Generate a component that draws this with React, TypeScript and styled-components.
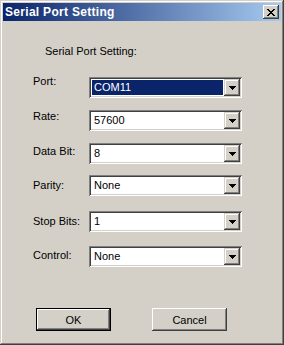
import styled, { createGlobalStyle } from 'styled-components'

const GlobalStyle = createGlobalStyle`
  html, body {
    margin: 0;
    padding: 0;
    background: #d4d0c8;
  }
  * {
    box-sizing: border-box;
  }
`

const Window = styled.div`
  width: 284px;
  height: 345px;
  padding: 3px;
  background: #d4d0c8;
  font-family: 'Liberation Sans', Arial, sans-serif;
  font-size: 11px;
  color: #000;
  box-shadow: inset -1px -1px #404040, inset 1px 1px #d4d0c8, inset -2px -2px #808080,
    inset 2px 2px #fff;
  display: flex;
  flex-direction: column;
`

const TitleBar = styled.div`
  height: 18px;
  display: flex;
  align-items: center;
  justify-content: space-between;
  padding: 0 2px 0 2px;
  background: linear-gradient(to right, #0a246a, #a6caf0);
`

const TitleText = styled.span`
  color: #fff;
  font-weight: bold;
  font-size: 12px;
  letter-spacing: 0.3px;
  line-height: 14px;
`

const CloseButton = styled.div`
  width: 16px;
  height: 14px;
  background: #d4d0c8;
  display: flex;
  align-items: center;
  justify-content: center;
  box-shadow: inset -1px -1px #404040, inset 1px 1px #fff, inset -2px -2px #808080,
    inset 2px 2px #d4d0c8;
`

const Body = styled.div`
  flex: 1;
  padding: 24px 0 0 30px;
  display: flex;
  flex-direction: column;
`

const Heading = styled.div`
  line-height: 13px;
  padding-left: 12px;
  margin-bottom: 19px;
`

const Row = styled.div<{ $gap: number }>`
  display: flex;
  align-items: flex-start;
  margin-top: ${({ $gap }) => $gap}px;
`

const Label = styled.div<{ $dy: number }>`
  width: 56px;
  line-height: 13px;
  margin-top: ${({ $dy }) => $dy}px;
`

const Combo = styled.div`
  width: 153px;
  height: 21px;
  padding: 2px;
  background: #fff;
  display: flex;
  box-shadow: inset 1px 1px #808080, inset -1px -1px #fff, inset 2px 2px #404040,
    inset -2px -2px #d4d0c8;
`

const ComboValue = styled.div<{ $selected?: boolean }>`
  flex: 1;
  display: flex;
  align-items: center;
  margin: 1px;
  padding-left: 2px;
  line-height: 15px;
  background: ${({ $selected }) => ($selected ? '#0a246a' : '#fff')};
  color: ${({ $selected }) => ($selected ? '#fff' : '#000')};
`

const ArrowButton = styled.div`
  width: 16px;
  height: 17px;
  background: #d4d0c8;
  display: flex;
  align-items: center;
  justify-content: center;
  box-shadow: inset -1px -1px #404040, inset 1px 1px #d4d0c8, inset -2px -2px #808080,
    inset 2px 2px #fff;
`

const Buttons = styled.div`
  display: flex;
  gap: 41px;
  margin-top: 41px;
  padding-left: 3px;
`

const Button = styled.div<{ $default?: boolean }>`
  width: 75px;
  height: 23px;
  display: flex;
  align-items: center;
  justify-content: center;
  background: #d4d0c8;
  box-shadow: ${({ $default }) =>
    $default
      ? 'inset 0 0 0 1px #000, inset -2px -2px #404040, inset 2px 2px #fff, inset -3px -3px #808080'
      : 'inset -1px -1px #404040, inset 1px 1px #fff, inset -2px -2px #808080'};
`

const Arrow = () => (
  <svg width="7" height="4" viewBox="0 0 7 4">
    <path d="M0 0h7v1h-1v1h-1v1h-1v1h-1v-1h-1v-1h-1v-1h-1z" fill="#000" />
  </svg>
)

const fields = [
  { label: 'Port:', value: 'COM11', selected: true, gap: 0, dy: -2 },
  { label: 'Rate:', value: '57600', gap: 12, dy: 0 },
  { label: 'Data Bit:', value: '8', gap: 12, dy: 2 },
  { label: 'Parity:', value: 'None', gap: 11, dy: 4 },
  { label: 'Stop Bits:', value: '1', gap: 15, dy: 4 },
  { label: 'Control:', value: 'None', gap: 14, dy: 3 },
]

const App = () => {
  return (
    <>
      <GlobalStyle />
      <Window>
        <TitleBar>
          <TitleText>Serial Port Setting</TitleText>
          <CloseButton>
            <svg width="8" height="7" viewBox="0 0 8 7">
              <path
                d="M0 0h2v1h1v1h2v-1h1v-1h2v1h-1v1h-1v1h-1v1h1v1h1v1h1v1h-2v-1h-1v-1h-2v1h-1v1h-2v-1h1v-1h1v-1h1v-1h-1v-1h-1v-1h-1z"
                fill="#000"
              />
            </svg>
          </CloseButton>
        </TitleBar>
        <Body>
          <Heading>Serial Port Setting:</Heading>
          {fields.map((f) => (
            <Row key={f.label} $gap={f.gap}>
              <Label $dy={f.dy}>{f.label}</Label>
              <Combo>
                <ComboValue $selected={f.selected}>{f.value}</ComboValue>
                <ArrowButton>
                  <Arrow />
                </ArrowButton>
              </Combo>
            </Row>
          ))}
          <Buttons>
            <Button $default>OK</Button>
            <Button>Cancel</Button>
          </Buttons>
        </Body>
      </Window>
    </>
  )
}

export default App
